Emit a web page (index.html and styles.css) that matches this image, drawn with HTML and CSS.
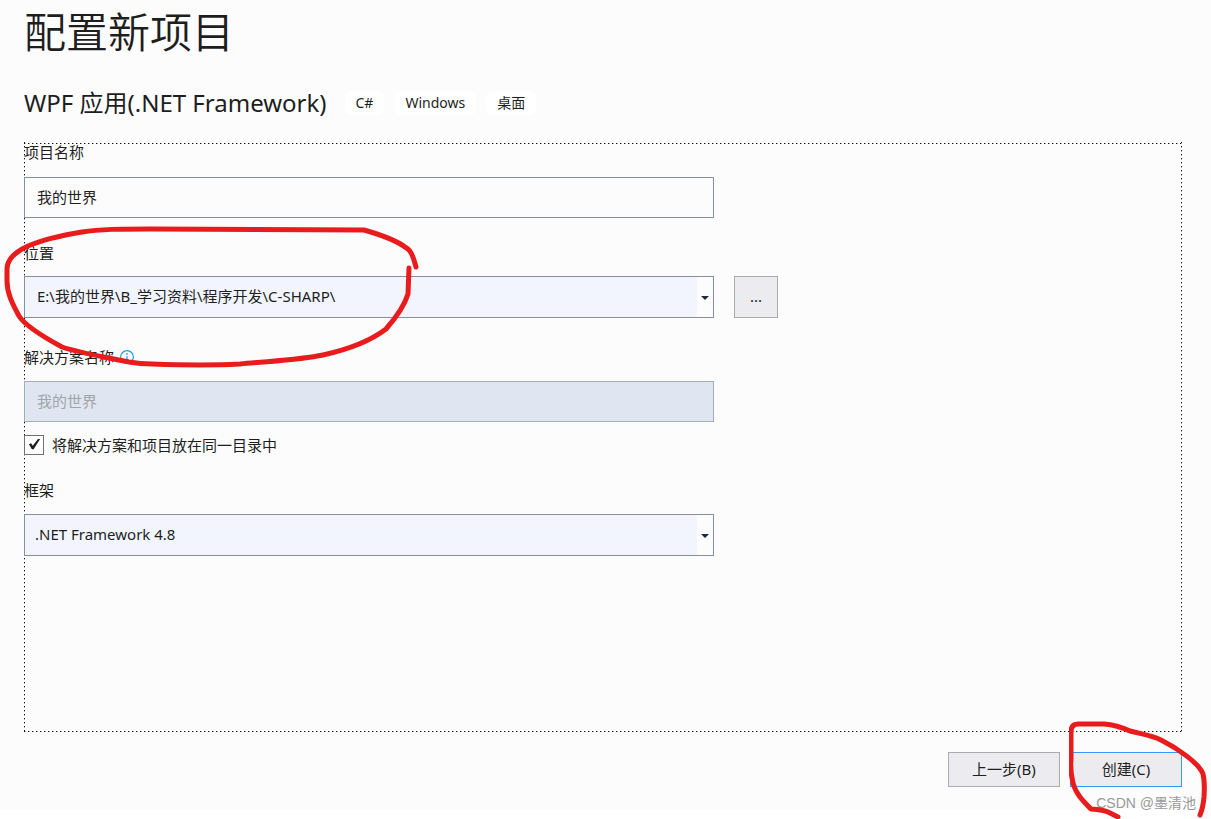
FILE: index.html
```
<!DOCTYPE html>
<html lang="zh-CN">
  <head>
    <meta charset="UTF-8" />
    <meta name="viewport" content="width=device-width, initial-scale=1.0" />
    <title>配置新项目</title>
    <link rel="stylesheet" href="styles.css">
  </head>
  <body>
    <div class="dialog">
      <header>
        <h1>配置新项目</h1>
        <div class="template">
          <h2>WPF 应用(.NET Framework)</h2>
          <ul class="tags">
            <li>C#</li>
            <li>Windows</li>
            <li>桌面</li>
          </ul>
        </div>
      </header>
      <form id="project">
        <div class="field name">
          <label for="name">项目名称</label>
          <input type="text" id="name" name="name" value="我的世界">
        </div>
        <div class="field location">
          <label for="location">位置</label>
          <div class="row">
            <div class="combo">
              <select id="location" name="location">
                <option>E:\我的世界\B_学习资料\程序开发\C-SHARP\</option>
              </select>
            </div>
            <button type="button" class="browse">...</button>
          </div>
          <!-- Red pen line round the location -->
          <svg class="pen pen-location" viewBox="0 0 420 144" aria-hidden="true">
            <path d="M416 42 C413 31 411 25 405 22 C397 16 378 9 364 5 L150 4 C120 4 100 4 82 7 C58 11 42 15 28 21 C15 27 7 34 7 44 L7 56 C7 68 12 78 19 91 C24 99 38 109 62 122 C80 128 105 132 129 137 Q140 139 152 139 C180 140 220 140 240 139 C270 136 300 135 323 130 C350 124 373 114 386 104 C393 96 404 82 408 69 L409 43" />
          </svg>
        </div>
        <div class="field solution">
          <div class="caption">
            <label for="solution">解决方案名称</label>
            <svg class="info" viewBox="0 0 14 14" aria-hidden="true">
              <circle cx="7" cy="7" r="6.4" />
              <path d="M7 3v2M7 6v5" />
            </svg>
          </div>
          <input type="text" id="solution" name="solution" value="我的世界" disabled>
        </div>
        <div class="same-dir">
          <input type="checkbox" id="same-dir" checked>
          <label for="same-dir">将解决方案和项目放在同一目录中</label>
        </div>
        <div class="field framework">
          <label for="framework">框架</label>
          <div class="combo">
            <select id="framework" name="framework">
              <option>.NET Framework 4.8</option>
            </select>
          </div>
        </div>
      </form>
      <footer>
        <button type="button">上一步(B)</button>
        <button type="submit" form="project" class="primary">创建(C)</button>
        <!-- Red pen line round the create button -->
        <svg class="pen pen-create" viewBox="0 0 142 100" aria-hidden="true">
          <path d="M49 97 L39 92 Q35 90 22 89 C16 83 7 75 4 63 Q1 50 2 40 L2 12 Q2 4 9 4 L35 4 Q48 5 61 11 C72 14 82 15 92 20 C108 28 130 43 134 54 Q136 62 135 77 Q134 88 131 95" />
        </svg>
        <span class="watermark">CSDN @墨清池</span>
      </footer>
    </div>
  </body>
</html>
```
FILE: styles.css
```
* {
  box-sizing: border-box;
  margin: 0;
  padding: 0;
}
body {
  min-height: 100vh;
  font-family: "Noto Sans", "Noto Sans CJK SC", sans-serif;
  font-size: 15px;
  line-height: 20px;
  color: #1e1e1e;
  background-color: #fff;
}
.dialog {
  display: flex;
  flex-direction: column;
  min-height: calc(100vh - 10px);
  padding: 2px 29px 22px 24px;
  background-color: #fcfcfc;
}
h1 {
  font-size: 42px;
  font-weight: 350;
  line-height: 60px;
}
.template {
  display: flex;
  align-items: center;
  gap: 18px;
  margin: 26px 0 24px;
}
h2 {
  font-size: 24px;
  font-weight: 400;
  line-height: 30px;
}
.tags {
  display: flex;
  gap: 10px;
  list-style: none;
  font-size: 14px;
}
.tags li {
  padding: 2px 11px;
  border-radius: 6px;
  background-color: #fff;
}
/* Focus rectangle */
form {
  flex: 1;
  padding-bottom: 20px;
  --dots-x: repeating-linear-gradient(90deg, #111 0 1px, #aaa 1px 2px, transparent 2px 4px);
  --dots-y: repeating-linear-gradient(#111 0 1px, #aaa 1px 2px, transparent 2px 4px);
  background-image: var(--dots-x), var(--dots-x), var(--dots-y), var(--dots-y);
  background-position: 0 1px, 0 100%, 0 0, 100% 0;
  background-size: 100% 1px, 100% 1px, 1px 100%, 1px 100%;
  background-repeat: no-repeat;
}
.field {
  display: flex;
  flex-direction: column;
  gap: 14px;
  max-width: 690px;
}
.name {
  gap: 15px;
}
.field input,
.combo select {
  width: 100%;
  height: 41px;
  padding: 0 12px 2px;
  border: 1px solid #858fa5;
  background-color: transparent;
  color: inherit;
  font: inherit;
}
.combo select {
  height: 42px;
  appearance: none;
  background-color: #f2f5fe;
}
.location {
  position: relative;
  gap: 13px;
  margin-top: 25px;
}
.row {
  display: flex;
  gap: 20px;
  width: 754px;
  max-width: calc(100vw - 53px);
}
.combo {
  position: relative;
  flex: 1;
}
.combo::before {
  content: "";
  position: absolute;
  top: 1px;
  right: 1px;
  bottom: 1px;
  width: 16px;
  background-color: #fcfcfc;
  pointer-events: none;
}
.combo::after {
  content: "";
  position: absolute;
  top: 20px;
  right: 5px;
  border: 4px solid transparent;
  border-top-color: #1b293e;
  border-bottom: 0;
  pointer-events: none;
}
button {
  width: 112px;
  height: 35px;
  padding-bottom: 2px;
  border: 1px solid #acacac;
  background-color: #ececf0;
  color: inherit;
  font: inherit;
}
.primary {
  border-color: #3399ff;
}
.browse {
  width: 44px;
  height: 42px;
}
.solution {
  margin-top: 29px;
}
.caption {
  display: flex;
  align-items: center;
  gap: 6px;
}
.info {
  width: 14px;
  height: 14px;
  fill: none;
  stroke: #1ba1e2;
  stroke-width: 1.2;
}
.field input:disabled {
  border-color: #a2adbc;
  background-color: #dfe6f2;
  color: #a2a4a5;
}
.same-dir {
  display: flex;
  align-items: center;
  gap: 8px;
  margin-top: 13px;
}
.same-dir input {
  width: 20px;
  height: 20px;
  appearance: none;
  border: 1px solid #717171;
  background-color: #fefefe;
}
.same-dir input:checked::before {
  content: "";
  display: block;
  width: 18px;
  height: 18px;
  background-color: #1e1e1e;
  clip-path: polygon(22% 46%, 34% 40%, 43% 54%, 72% 16%, 84% 16%, 48% 74%, 38% 74%);
}
.framework {
  margin-top: 25px;
}
.framework select {
  padding-left: 10px;
}
footer {
  position: relative;
  display: flex;
  justify-content: flex-end;
  gap: 10px;
  margin-top: 20px;
}
.watermark {
  position: absolute;
  right: -14px;
  bottom: -26px;
  font-family: "Liberation Sans", "Noto Sans CJK SC", sans-serif;
  font-size: 14px;
  color: #999;
}
/* Hand-drawn marks lie over the dialog */
.pen {
  position: absolute;
  z-index: 1;
  fill: none;
  stroke: #e81c1c;
  stroke-width: 5;
  stroke-linecap: round;
  stroke-linejoin: round;
  pointer-events: none;
}
.pen-location {
  top: -18px;
  left: -24px;
  width: 420px;
  height: 144px;
}
.pen-create {
  top: -32px;
  right: -29px;
  width: 142px;
  height: 100px;
}
```
